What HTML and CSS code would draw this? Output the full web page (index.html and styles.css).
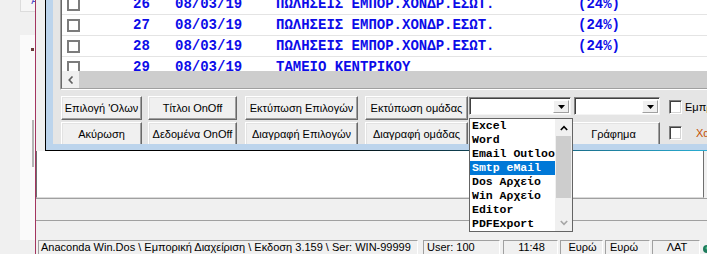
FILE: index.html
```html
<!doctype html>
<html lang="el">
  <head>
    <meta charset="UTF-8" />
    <title>Anaconda Win.Dos</title>
    <link rel="stylesheet" href="styles.css">
  </head>

  <body>
    <div class="side">
      <div class="side-col">
        <div class="side-tab"><span class="side-glyph">A</span></div>
        <div class="side-sheet">
          <span class="side-arrow"></span>
          <span class="side-bar"></span>
        </div>
      </div>
    </div>
    <div class="edge"></div>

    <div class="app">
      <div class="work">
        <div class="window">
          <div class="client">
            <div class="grid">
              <div class="grid-body">
                <div class="row">
                  <span class="tick"></span><span class="num">26</span><span class="date">08/03/19</span><span class="desc">ΠΩΛΗΣΕΙΣ ΕΜΠΟΡ.ΧΟΝΔΡ.ΕΣΩΤ.</span><span class="vat">(24%)</span>
                </div>
                <div class="row">
                  <span class="tick"></span><span class="num">27</span><span class="date">08/03/19</span><span class="desc">ΠΩΛΗΣΕΙΣ ΕΜΠΟΡ.ΧΟΝΔΡ.ΕΣΩΤ.</span><span class="vat">(24%)</span>
                </div>
                <div class="row">
                  <span class="tick"></span><span class="num">28</span><span class="date">08/03/19</span><span class="desc">ΠΩΛΗΣΕΙΣ ΕΜΠΟΡ.ΧΟΝΔΡ.ΕΣΩΤ.</span><span class="vat">(24%)</span>
                </div>
                <div class="row">
                  <span class="tick"></span><span class="num">29</span><span class="date">08/03/19</span><span class="desc">ΤΑΜΕΙΟ ΚΕΝΤΡΙΚΟΥ</span><span class="vat"></span>
                </div>
              </div>
              <div class="hscroll">
                <span class="hscroll-btn">
                  <svg width="6" height="8" viewBox="0 0 6 8"><polyline points="4.5,0.5 1.2,4 4.5,7.5" fill="none" stroke="#606060" stroke-width="1.6"/></svg>
                </span>
                <span class="hscroll-thumb"></span>
              </div>
            </div>

            <div class="buttons">
              <div class="btn-row">
                <button class="btn col1">Επιλογή 'Ολων</button>
                <button class="btn col2">Τίτλοι OnOff</button>
                <button class="btn col3">Εκτύπωση Επιλογών</button>
                <button class="btn col4">Εκτύπωση ομάδας</button>
                <div class="combo combo-wide">
                  <span class="combo-btn"><svg width="7" height="4" viewBox="0 0 7 4"><polygon points="0,0 7,0 3.5,4" fill="#000"/></svg></span>
                </div>
                <div class="combo combo-narrow">
                  <span class="combo-btn"><svg width="7" height="4" viewBox="0 0 7 4"><polygon points="0,0 7,0 3.5,4" fill="#000"/></svg></span>
                </div>
                <span class="check"></span>
                <span class="label">Εμπρόθεσμα</span>
              </div>
              <div class="btn-row">
                <button class="btn col1">Ακύρωση</button>
                <button class="btn col2">Δεδομένα OnOff</button>
                <button class="btn col3">Διαγραφή Επιλογών</button>
                <button class="btn col4">Διαγραφή ομάδας</button>
                <button class="btn col5"></button>
                <button class="btn col6">Γράφημα</button>
                <span class="check"></span>
                <span class="label label-warn">Χαρτί</span>
              </div>
            </div>
          </div>
        </div>
        <div class="pane"></div>

        <div class="droplist">
          <ul class="opts">
            <li>Excel</li>
            <li>Word</li>
            <li>Email Outlook</li>
            <li class="picked">Smtp eMail</li>
            <li>Dos Αρχείο</li>
            <li>Win Αρχείο</li>
            <li>Editor</li>
            <li>PDFExport</li>
          </ul>
          <div class="vscroll">
            <span class="vs-btn"><svg width="8" height="6" viewBox="0 0 8 6"><polyline points="0.8,5 4,1.6 7.2,5" fill="none" stroke="#000" stroke-width="1.6"/></svg></span>
            <span class="vs-thumb"></span>
            <span class="vs-track"></span>
            <span class="vs-btn"><svg width="8" height="6" viewBox="0 0 8 6"><polyline points="0.8,1 4,4.4 7.2,1" fill="none" stroke="#a6a6a6" stroke-width="1.6"/></svg></span>
          </div>
        </div>
      </div>

      <div class="band"></div>
      <div class="band band-low"></div>

      <div class="status">
        <span class="cell cell-info">Anaconda Win.Dos \ Εμπορική Διαχείριση \ Εκδοση 3.159 \ Ser: WIN-99999</span>
        <span class="cell cell-user">User: 100</span>
        <span class="cell cell-time">11:48</span>
        <span class="cell cell-cur">Ευρώ</span>
        <span class="cell cell-cur2">Ευρώ</span>
        <span class="cell cell-lang">ΛΑΤ</span>
        <svg class="tray" width="6" height="12" viewBox="0 0 6 12"><circle cx="5" cy="6" r="4" fill="#1d7b5c"/><circle cx="5" cy="5" r="1.5" fill="#4fc08a"/></svg>
      </div>
    </div>
  </body>
</html>
```

FILE: styles.css
```css
* {
  box-sizing: border-box;
}

html,
body {
  margin: 0;
  padding: 0;
}

body {
  width: 707px;
  height: 254px;
  overflow: hidden;
  display: flex;
  background: #f0f0f0;
  font-family: "Liberation Sans", Arial, sans-serif;
  font-size: 11px;
  color: #000;
}

/* left strip of the window behind */
.side {
  width: 35px;
  padding-left: 20px;
  display: flex;
  flex: none;
}

.side-col {
  width: 15px;
  display: flex;
  flex-direction: column;
}

.side-tab {
  height: 12px;
  background: #f6f6f6;
  border-left: 1px solid #dcdcdc;
  border-bottom: 1px solid #dcdcdc;
  display: flex;
  justify-content: flex-end;
  overflow: hidden;
}

.side-glyph {
  font-size: 10px;
  line-height: 8px;
  color: #4a4ac8;
  margin-top: -3px;
  margin-right: -3px;
}

.side-sheet {
  margin-top: 23px;
  height: 205px;
  background: #fafafa;
  display: flex;
  flex-direction: column;
  align-items: flex-end;
}

.side-arrow {
  margin-top: 13px;
  margin-right: 1px;
  width: 3px;
  height: 3px;
  background: #6a3a3a;
}

.side-bar {
  margin-top: 69px;
  margin-right: 1px;
  width: 2px;
  height: 47px;
  background: #b4b4b4;
}

.edge {
  width: 1px;
  flex: none;
  background: #a3355f;
}

.app {
  flex: 1;
  min-width: 0;
  display: flex;
  flex-direction: column;
}

.work {
  position: relative;
  height: 198px;
  display: flex;
  flex-direction: column;
}

/* dialog window */
.window {
  margin-left: 9px;
  height: 151px;
  padding: 0 0 6px 7px;
  background: #bcd4ec;
  border-left: 1px solid #000;
  border-bottom: 1px solid #000;
  border-image: linear-gradient(to right, #000 40%, #16607a 75%, #2aaed4) 1;
}

.client {
  height: 144px;
  padding-left: 7px;
  background: #e5e5e5;
  overflow: hidden;
}

.grid {
  border-left: 1px solid #a0a0a0;
  border-bottom: 1px solid #fff;
}

.grid-body {
  height: 71px;
  overflow: hidden;
  background: #fff;
  border-left: 1px solid #696969;
}

.row {
  height: 21px;
  display: flex;
  align-items: center;
  border-bottom: 1px solid #e4e4e4;
  font-family: "Liberation Mono", "Courier New", monospace;
  font-weight: bold;
  font-size: 14px;
  color: #0c0ce8;
  white-space: pre;
}

.row:first-child {
  margin-top: -6px;
}

.tick {
  width: 13px;
  height: 13px;
  margin-left: 5px;
  border: 2px solid #7c7c7c;
  flex: none;
}

.num {
  margin-left: 53px;
  width: 42px;
  flex: none;
}

.date {
  width: 101px;
  flex: none;
}

.desc {
  width: 302px;
  flex: none;
}

.hscroll {
  height: 18px;
  display: flex;
  border-left: 1px solid #696969;
  border-bottom: 1px solid #a0a0a0;
}

.hscroll-btn {
  width: 17px;
  background: #f0f0f0;
  display: flex;
  align-items: center;
  justify-content: center;
}

.hscroll-thumb {
  flex: 1;
  background: #cdcdcd;
}

/* button panel */
.buttons {
  padding: 6px 0 0 1px;
  display: flex;
  flex-direction: column;
  gap: 2px;
}

.btn-row {
  height: 24px;
  display: flex;
  align-items: flex-start;
}

.btn {
  height: 24px;
  padding: 0;
  flex: none;
  font: inherit;
  color: #000;
  background: #f0f0f0;
  border: 1px solid;
  border-color: #fff #696969 #696969 #fff;
  box-shadow: inset -1px -1px #a0a0a0, inset 1px 1px #e3e3e3;
  white-space: nowrap;
}

.col1 {
  width: 81px;
  margin-right: 6px;
}

.col2 {
  width: 89px;
  margin-right: 8px;
}

.col3 {
  width: 113px;
  margin-right: 7px;
}

.col4 {
  width: 103px;
  margin-right: 1px;
}

.col5 {
  width: 96px;
  margin-right: 2px;
}

.col6 {
  width: 93px;
  margin-right: 9px;
}

.combo {
  height: 18px;
  margin-top: 1px;
  padding: 2px 1px 1px 2px;
  display: flex;
  justify-content: flex-end;
  flex: none;
  background: #fff;
  border: 1px solid;
  border-color: #828282 #f4f4f4 #f4f4f4 #828282;
  box-shadow: inset 1px 1px #404040;
}

.combo-wide {
  width: 102px;
  margin-right: 3px;
}

.combo-narrow {
  width: 86px;
  margin-right: 9px;
}

.combo-btn {
  width: 16px;
  height: 13px;
  display: flex;
  align-items: center;
  justify-content: center;
  background: #f0f0f0;
  border: 1px solid;
  border-color: #fff #a0a0a0 #a0a0a0 #fff;
}

.check {
  width: 13px;
  height: 14px;
  margin-top: 4px;
  flex: none;
  background: #fff;
  border: 1px solid;
  border-color: #808080 #fff #fff #808080;
  box-shadow: inset 1px 1px #404040, inset -1px -1px #d4d4d4;
}

.label {
  margin-left: 3px;
  margin-top: 5px;
  line-height: 13px;
  white-space: nowrap;
}

.label-warn {
  margin-left: 14px;
  color: #c45000;
}

.pane {
  height: 47px;
  width: 668px;
  background: #fff;
  border-left: 1px solid #6e6e6e;
  border-right: 1px solid #6e6e6e;
  border-bottom: 1px solid #dadada;
}

/* open dropdown of the first combo */
.droplist {
  position: absolute;
  left: 433px;
  top: 118px;
  width: 104px;
  height: 114px;
  display: flex;
  background: #fff;
  border: 1px solid #646464;
}

.opts {
  flex: 1;
  min-width: 0;
  margin: 0;
  padding: 0;
  list-style: none;
  overflow: hidden;
  font-family: "Liberation Mono", "Courier New", monospace;
  font-weight: bold;
  font-size: 11.5px;
}

.opts li {
  height: 14px;
  line-height: 14px;
  padding-left: 2px;
  white-space: nowrap;
}

.opts .picked {
  background: #0078d7;
  color: #fff;
}

.vscroll {
  width: 17px;
  flex: none;
  display: flex;
  flex-direction: column;
  background: #f0f0f0;
}

.vs-btn {
  height: 17px;
  display: flex;
  align-items: center;
  justify-content: center;
}

.vs-thumb {
  height: 62px;
  margin: 0 1px;
  background: #cdcdcd;
}

.vs-track {
  flex: 1;
}

.band {
  height: 22px;
  border-top: 1px solid #a0a0a0;
}

.band-low {
  height: 19px;
}

/* status bar */
.status {
  height: 15px;
  padding: 1px 0 0 2px;
  display: flex;
  align-items: flex-start;
}

.cell {
  height: 14px;
  line-height: 13px;
  padding-left: 2px;
  flex: none;
  overflow: hidden;
  white-space: nowrap;
  border-left: 1px solid #a0a0a0;
  border-top: 1px solid #a0a0a0;
  border-right: 1px solid #fff;
}

.cell-info {
  width: 380px;
  margin-right: 5px;
}

.cell-user {
  width: 77px;
  margin-right: 3px;
  padding-left: 3px;
}

.cell-time {
  width: 55px;
  margin-right: 2px;
  text-align: center;
}

.cell-cur {
  width: 43px;
  margin-right: 2px;
  text-align: center;
}

.cell-cur2 {
  width: 45px;
  margin-right: 2px;
  padding-left: 4px;
}

.cell-lang {
  width: 48px;
  margin-right: 2px;
  text-align: center;
}

.tray {
  margin-top: 3px;
  flex: none;
}
```
